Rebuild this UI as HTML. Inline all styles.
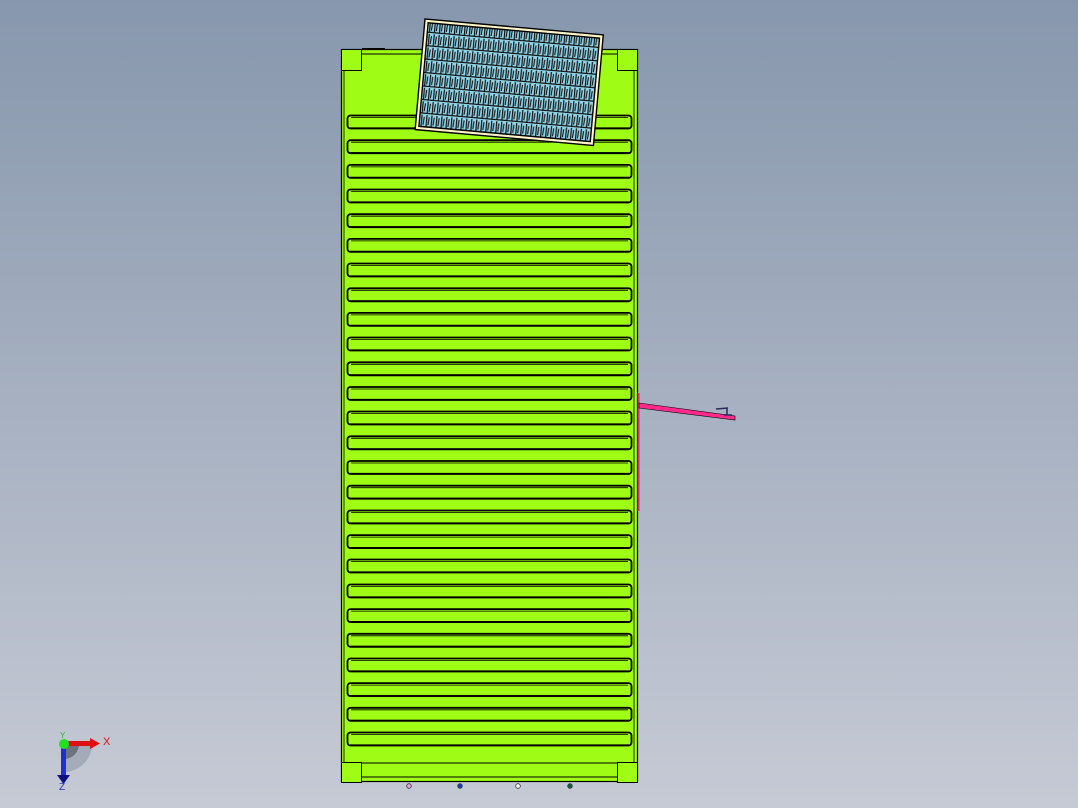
<!DOCTYPE html>
<html><head><style>
html,body{margin:0;padding:0;width:1078px;height:808px;overflow:hidden;background:linear-gradient(#8797ad,#c6cad5);font-family:"Liberation Sans",sans-serif}
svg{position:absolute;left:0;top:0}
</style></head><body>
<svg width="1078" height="808" viewBox="0 0 1078 808">
<defs>
<pattern id="cell" x="0" y="0" width="5" height="13.5" patternUnits="userSpaceOnUse">
<rect width="5" height="13.5" fill="#8fd3e6"/>
<line x1="0.6" y1="1" x2="0.6" y2="12.5" stroke="#111" stroke-width="1.2"/>
<line x1="3" y1="3" x2="2.4" y2="11" stroke="#111" stroke-width="1.1"/>
<line x1="0" y1="13" x2="5" y2="13" stroke="#111" stroke-width="1.5"/>
</pattern>
</defs>
<rect x="341.5" y="49.5" width="296" height="732" fill="#9ffc14" stroke="#000" stroke-width="1.2"/>
<line x1="344" y1="70" x2="344" y2="762" stroke="#000" stroke-width="0.8"/>
<line x1="634" y1="70" x2="634" y2="762" stroke="#000" stroke-width="0.8"/>
<line x1="361" y1="54" x2="617" y2="54" stroke="#000" stroke-width="1"/>
<line x1="361" y1="763" x2="617" y2="763" stroke="#000" stroke-width="1"/>
<line x1="361" y1="777" x2="617" y2="777" stroke="#000" stroke-width="1"/>
<rect x="341.5" y="49.5" width="20" height="21" fill="#9ffc14" stroke="#000"/>
<rect x="617.5" y="49.5" width="20" height="21" fill="#9ffc14" stroke="#000"/>
<rect x="341.5" y="762.5" width="20" height="20" fill="#9ffc14" stroke="#000"/>
<rect x="617.5" y="762.5" width="20" height="20" fill="#9ffc14" stroke="#000"/>
<line x1="362" y1="48.5" x2="385" y2="48.5" stroke="#000"/>
<g fill="none" stroke="#000">
<g id="s">
<rect x="347.5" y="115.5" width="284" height="13" rx="3" stroke-width="1.8"/>
<line x1="351" y1="117.5" x2="628" y2="117.5" stroke-width="0.8"/>
<line x1="350" y1="128" x2="629" y2="128" stroke-width="1.2"/>
</g>
<use href="#s" y="24.7"/><use href="#s" y="49.4"/><use href="#s" y="74"/><use href="#s" y="98.7"/>
<use href="#s" y="123.4"/><use href="#s" y="148"/><use href="#s" y="172.8"/><use href="#s" y="197.4"/>
<use href="#s" y="222"/><use href="#s" y="246.8"/><use href="#s" y="271.5"/><use href="#s" y="296"/>
<use href="#s" y="320.8"/><use href="#s" y="345.5"/><use href="#s" y="370.2"/><use href="#s" y="395"/>
<use href="#s" y="419.6"/><use href="#s" y="444"/><use href="#s" y="469"/><use href="#s" y="493.6"/>
<use href="#s" y="518.3"/><use href="#s" y="543"/><use href="#s" y="567.6"/><use href="#s" y="592.3"/>
<use href="#s" y="617"/>
</g>
<g transform="translate(425,19) rotate(5.1)">
<rect x="0" y="0" width="179" height="111" fill="#fff5c8" stroke="#000" stroke-width="1.4"/>
<rect x="3.5" y="3.5" width="172" height="104" fill="url(#cell)" stroke="#000" stroke-width="1.4"/>
</g>
<line x1="638.5" y1="393" x2="638.5" y2="511" stroke="#e0209a" stroke-width="2"/>
<polygon points="639,403 735,416 735,420 639,408" fill="#ff2a8a" stroke="#000" stroke-width="0.6"/>
<path d="M716,409 L728,408 M727,408 L727,415 M724,415 L732,415" stroke="#2a2a60" stroke-width="1.5" fill="none"/>
<circle cx="409" cy="786" r="2.3" fill="#f0a0e0" stroke="#333" stroke-width="0.8"/>
<circle cx="460" cy="786" r="2.3" fill="#1040c0" stroke="#333" stroke-width="0.8"/>
<circle cx="518" cy="786" r="2.3" fill="#fff" stroke="#333" stroke-width="0.8"/>
<circle cx="570" cy="786" r="2.3" fill="#106040" stroke="#333" stroke-width="0.8"/>
<path d="M64,744 L92,744 A28,28 0 0 1 64,772 Z" fill="#9098a8" opacity="0.6"/>
<path d="M64,744 L79,744 A15,15 0 0 1 64,759 Z" fill="#555c68" opacity="0.7"/>
<rect x="64" y="741" width="26" height="5" fill="#e01010"/>
<polygon points="90,738 100,743.5 90,749" fill="#e01010"/>
<rect x="61" y="744" width="5" height="32" fill="#2030d0"/>
<polygon points="57,775 70,775 63.5,784" fill="#101080"/>
<circle cx="64" cy="744" r="5" fill="#20e020"/>
<text x="103" y="745" font-size="11" fill="#e01010">X</text>
<text x="59" y="790" font-size="10" fill="#2030d0">Z</text>
<text x="60" y="738" font-size="8" fill="#20c020">Y</text>
</svg>
</body></html>
